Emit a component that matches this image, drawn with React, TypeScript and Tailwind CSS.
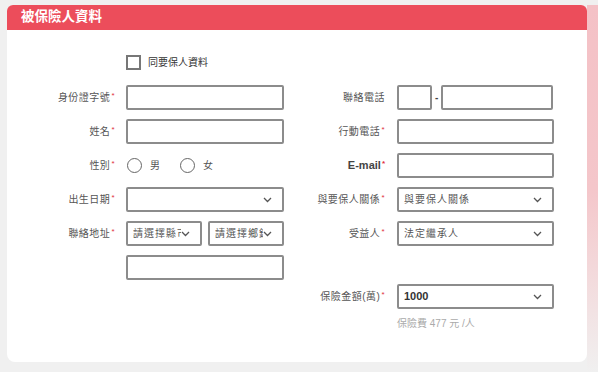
import React from 'react'

const font = "font-['Liberation_Sans','Noto_Sans_CJK_TC',sans-serif]"

function Chevron() {
  return (
    <svg width="9" height="6" viewBox="0 0 9 6" className="shrink-0">
      <polyline points="1,1 4.5,4.5 8,1" fill="none" stroke="#555" strokeWidth="1.3" />
    </svg>
  )
}

function Label({ text, req = true }: { text: string; req?: boolean }) {
  return (
    <div className="flex items-center justify-end text-[10px] tracking-[0.5px] text-[#555]">
      <span>{text}</span>
      {req && <span className="ml-[1px] -mt-[4px] text-[8px] text-[#e0303f]">*</span>}
    </div>
  )
}

function Box({ className = '' }: { className?: string }) {
  return <div className={`h-[25px] rounded-[2px] border-2 border-[#8c8c8c] bg-white ${className}`} />
}

function Select({ value = '', bold = false, className = '' }: { value?: string; bold?: boolean; className?: string }) {
  return (
    <div className={`flex h-[25px] items-center rounded-[2px] border-2 border-[#8c8c8c] bg-white pl-[5px] pr-[10px] ${className}`}>
      <span
        className={`flex-1 overflow-hidden whitespace-nowrap ${
          bold ? 'text-[11px] font-bold text-[#333]' : 'text-[10px] tracking-[1px] text-[#555]'
        }`}
      >
        {value}
      </span>
      <Chevron />
    </div>
  )
}

function Radio({ text }: { text: string }) {
  return (
    <div className="flex items-center gap-[8px]">
      <div className="h-[15px] w-[15px] rounded-full border-[1.5px] border-[#666]" />
      <span className="text-[10px] text-[#555]">{text}</span>
    </div>
  )
}

export default function App() {
  return (
    <div className={`flex min-h-[372px] w-[598px] bg-[#f0f0f0] pt-[5px] ${font}`}>
      <div className="ml-[7px] flex h-[357px] w-[580px] flex-col overflow-hidden rounded-t-[6px] rounded-b-[8px] bg-white">
        <div className="flex h-[25px] items-center bg-[#ec4d5b] pl-[14px] text-[13.5px] font-bold text-white">
          被保險人資料
        </div>

        <div className="mt-[25px] flex items-center gap-[7px] pl-[119px]">
          <div className="h-[15px] w-[15px] border-2 border-[#777]" />
          <span className="text-[10px] text-[#333]">同要保人資料</span>
        </div>

        <div className="mt-[15px] flex items-start">
          {/* left column */}
          <div className="grid w-[277px] grid-cols-[108px_158px] content-start gap-x-[11px] gap-y-[9px]">
            <Label text="身份證字號" />
            <Box />
            <Label text="姓名" />
            <Box />
            <Label text="性別" />
            <div className="flex h-[25px] items-center gap-[20px] pl-[1px]">
              <Radio text="男" />
              <Radio text="女" />
            </div>
            <Label text="出生日期" />
            <Select />
            <Label text="聯絡地址" />
            <div className="flex gap-[6px]">
              <Select value="請選擇縣市" className="w-[76px] pr-[6px]" />
              <Select value="請選擇鄉鎮" className="w-[76px] pr-[6px]" />
            </div>
            <div />
            <Box />
          </div>

          {/* right column */}
          <div className="ml-[6px] grid grid-cols-[95px_157px] content-start gap-x-[12px] gap-y-[9px]">
            <Label text="聯絡電話" req={false} />
            <div className="flex items-center">
              <Box className="w-[35px]" />
              <span className="mx-[3px] text-[10px] font-bold text-[#444]">-</span>
              <Box className="w-[112px]" />
            </div>
            <Label text="行動電話" />
            <Box />
            <div className="flex items-center justify-end text-[11px] font-bold text-[#444]">
              E-mail<span className="ml-[1px] -mt-[4px] text-[8px] text-[#e0303f]">*</span>
            </div>
            <Box />
            <Label text="與要保人關係" />
            <Select value="與要保人關係" />
            <Label text="受益人" />
            <Select value="法定繼承人" />
            <div className="h-[20px]" />
            <div className="h-[20px]" />
            <Label text="保險金額(萬)" />
            <Select value="1000" bold />
            <div />
            <div className="-mt-[2px] text-[10px] text-[#aaa]">保險費 477 元 /人</div>
          </div>
        </div>
      </div>
      <div className="ml-auto w-[11px] bg-gradient-to-b from-[#f4c1c6] via-[#f4c6ca] to-[#f0f0f0]" />
    </div>
  )
}
